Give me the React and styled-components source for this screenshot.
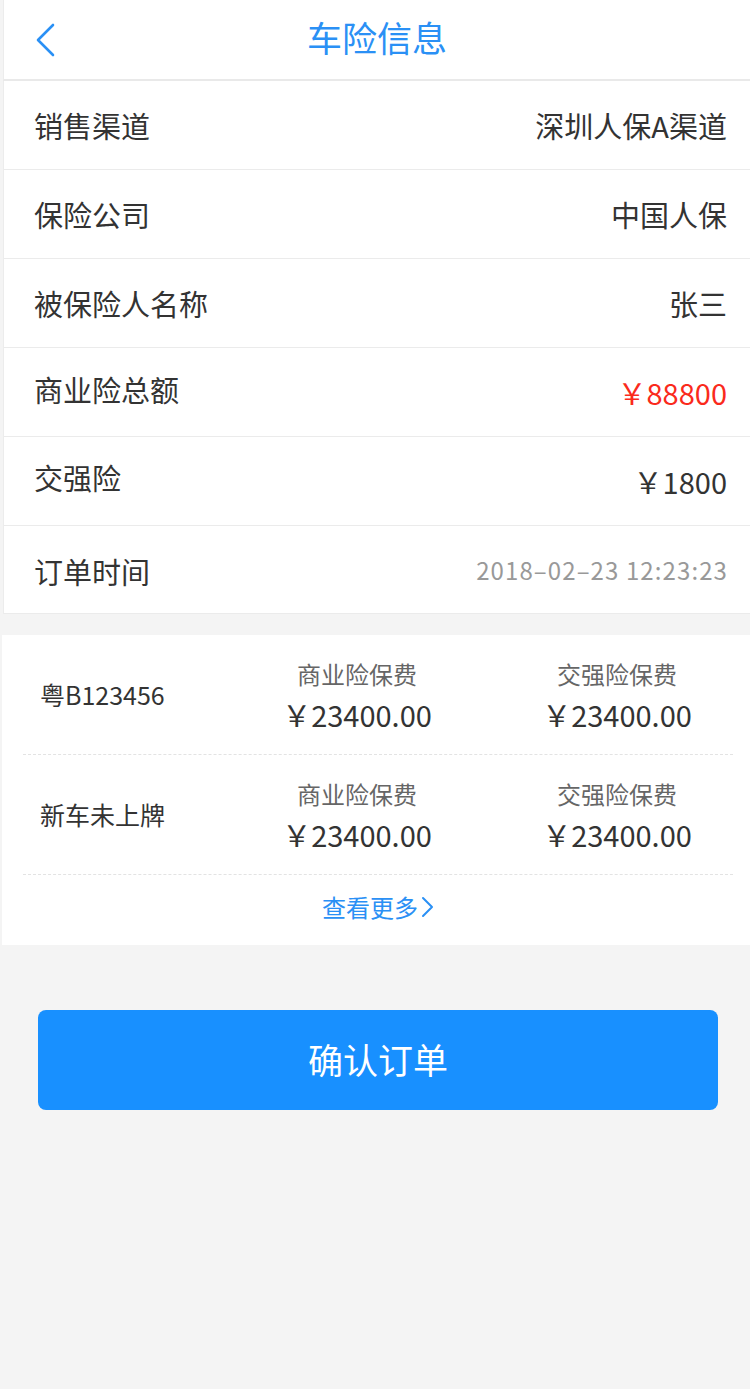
import React from "react";
import styled, { createGlobalStyle } from "styled-components";

const Global = createGlobalStyle`
  html, body { margin: 0; padding: 0; background: #f4f4f4; }
  body {
    font-family: "Noto Sans CJK SC", "Noto Sans", sans-serif;
    color: #333;
    -webkit-font-smoothing: antialiased;
  }
  * { box-sizing: border-box; }
`;

const Page = styled.div`
  width: 750px;
  min-height: 1389px;
  background: #f4f4f4;
  display: flex;
  flex-direction: column;
`;

const Header = styled.header`
  height: 81px;
  margin-left: 3px;
  background: #fff;
  border-left: 1px solid #ececec;
  border-bottom: 2px solid #e9e9e9;
  display: grid;
  grid-template-columns: 80px 1fr 80px;
  align-items: center;
`;

const BackButton = styled.button`
  border: 0;
  background: none;
  padding: 0 0 0 32px;
  height: 100%;
  display: flex;
  align-items: center;
  cursor: pointer;
`;

const Title = styled.h1`
  margin: 0;
  text-align: center;
  font-size: 35px;
  font-weight: 400;
  color: #2a90f5;
  line-height: 1;
  padding-bottom: 6px;
`;

const InfoList = styled.section`
  margin-left: 3px;
  background: #fff;
  border-left: 1px solid #ececec;
`;

const InfoRow = styled.div`
  height: 89px;
  padding: 0 23px 0 30px;
  display: flex;
  align-items: center;
  justify-content: space-between;
  border-bottom: 1px solid #ebebeb;
  &:last-child { height: 88px; }
`;

const Label = styled.span`
  font-size: 29px;
  color: #333;
  line-height: 1;
  transform: translateY(${(p) => p.$dy || 0}px);
`;

const Value = styled.span`
  font-size: ${(p) => (p.$small ? "24px" : "29px")};
  color: ${(p) => p.$color || "#333"};
  line-height: 1;
  letter-spacing: ${(p) => (p.$small ? "1.1px" : "0")};
  margin-right: ${(p) => (p.$small ? "-1px" : "0")};
`;

const Card = styled.section`
  margin: 21px 0 0 2px;
  background: #fff;
  padding: 0 17px 0 21px;
`;

const PolicyRow = styled.div`
  height: 120px;
  display: grid;
  grid-template-columns: 192px 290px 228px;
  align-items: center;
  border-bottom: 1px dashed #e3e3e3;
`;

const Plate = styled.span`
  padding-left: 17px;
  font-size: 25px;
  color: #333;
  line-height: 1;
`;

const Fee = styled.div`
  display: flex;
  flex-direction: column;
  align-items: center;
  gap: 14px;
  transform: translate(${(p) => p.$dx || 0}px, 1px);
`;

const FeeLabel = styled.span`
  font-size: 24px;
  color: #666;
  line-height: 1;
`;

const FeeAmount = styled.span`
  font-size: 29px;
  color: #333;
  line-height: 1;
`;

const MoreLink = styled.a`
  height: 70px;
  display: flex;
  align-items: center;
  justify-content: center;
  gap: 2px;
  font-size: 24px;
  color: #2a90f5;
  text-decoration: none;
  line-height: 1;
  padding-bottom: 6px;
`;

const Footer = styled.div`
  padding: 65px 32px 0 38px;
`;

const ConfirmButton = styled.button`
  width: 680px;
  height: 100px;
  border: 0;
  border-radius: 8px;
  background: #1890ff;
  color: #fff;
  font-family: inherit;
  font-size: 35px;
  line-height: 1;
  padding-bottom: 4px;
  cursor: pointer;
`;

const info = [
  { label: "销售渠道", value: "深圳人保A渠道" },
  { label: "保险公司", value: "中国人保" },
  { label: "被保险人名称", value: "张三" },
  { label: "商业险总额", value: "￥88800", color: "#fa2a1c", dy: -3 },
  { label: "交强险", value: "￥1800", dy: -4 },
  { label: "订单时间", value: "2018–02–23 12:23:23", small: true, color: "#999", dy: 2 },
];

const policies = [
  { plate: "粤B123456", biz: "￥23400.00", comp: "￥23400.00" },
  { plate: "新车未上牌", biz: "￥23400.00", comp: "￥23400.00" },
];

export default function App() {
  return (
    <Page>
      <Global />
      <Header>
        <BackButton aria-label="返回">
          <svg width="20" height="34" viewBox="0 0 20 34" fill="none">
            <path d="M17 2 L2 17 L17 32" stroke="#2a90f5" strokeWidth="2.6" strokeLinecap="round" strokeLinejoin="round" />
          </svg>
        </BackButton>
        <Title>车险信息</Title>
        <span />
      </Header>
      <InfoList>
        {info.map((r) => (
          <InfoRow key={r.label}>
            <Label $dy={r.dy}>{r.label}</Label>
            <Value $color={r.color} $small={r.small}>{r.value}</Value>
          </InfoRow>
        ))}
      </InfoList>
      <Card>
        {policies.map((p) => (
          <PolicyRow key={p.plate}>
            <Plate>{p.plate}</Plate>
            <Fee $dx={-3}>
              <FeeLabel>商业险保费</FeeLabel>
              <FeeAmount>{p.biz}</FeeAmount>
            </Fee>
            <Fee $dx={-2}>
              <FeeLabel>交强险保费</FeeLabel>
              <FeeAmount>{p.comp}</FeeAmount>
            </Fee>
          </PolicyRow>
        ))}
        <MoreLink href="#">
          查看更多
          <svg width="14" height="22" viewBox="0 0 14 22" fill="none">
            <path d="M3 2 L12 11 L3 20" stroke="#2a90f5" strokeWidth="2" strokeLinecap="round" strokeLinejoin="round" />
          </svg>
        </MoreLink>
      </Card>
      <Footer>
        <ConfirmButton>确认订单</ConfirmButton>
      </Footer>
    </Page>
  );
}
